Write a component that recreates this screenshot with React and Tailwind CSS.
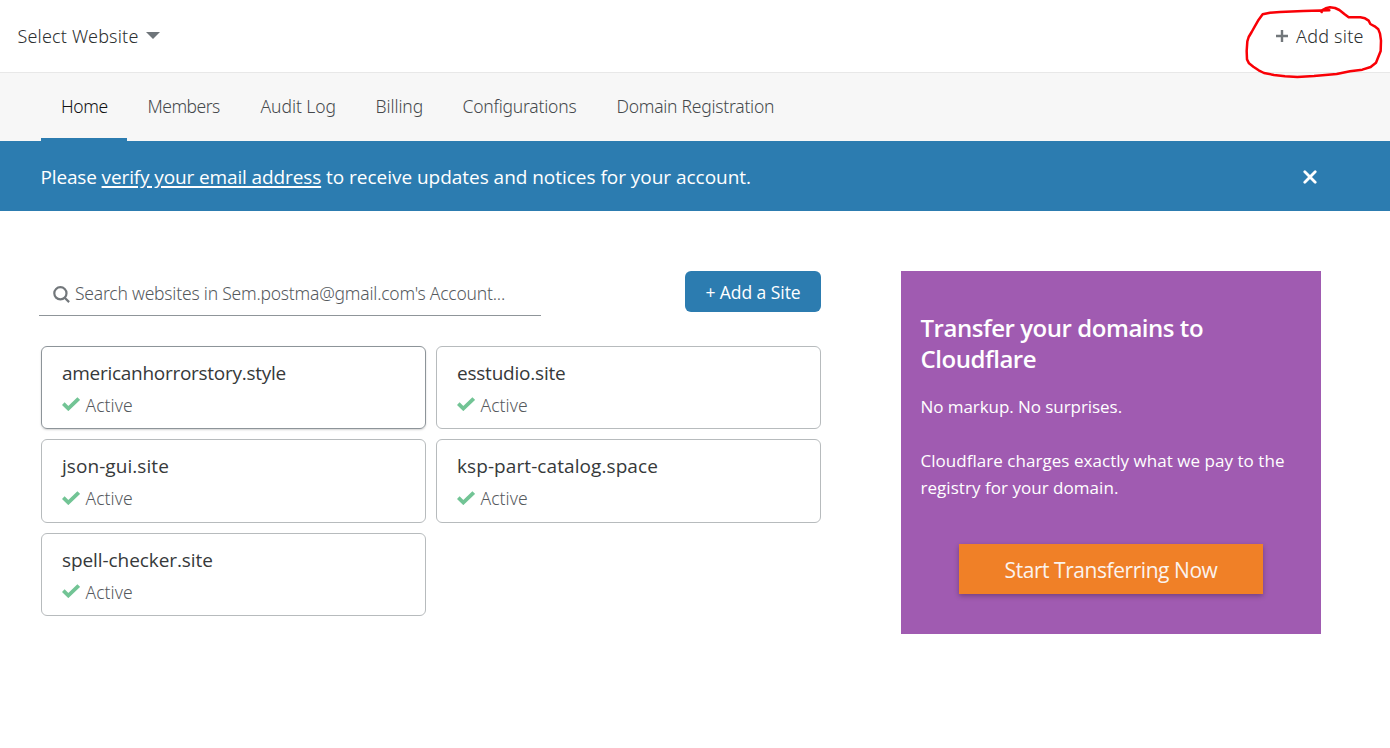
import React from "react";

const tabs = [
  { label: "Home", width: "w-[46px]", spacing: "tracking-[-0.4px]" },
  { label: "Members", width: "w-[73px]", spacing: "tracking-[-0.5px]" },
  { label: "Audit Log", width: "w-[75px]", spacing: "tracking-[-0.05px]" },
  { label: "Billing", width: "w-[47px]", spacing: "tracking-[-0.1px]" },
  { label: "Configurations", width: "w-[114px]", spacing: "tracking-[-0.22px]" },
  { label: "Domain Registration", width: "w-[158px]", spacing: "tracking-[-0.25px]" },
];

const sites = [
  { name: "americanhorrorstory.style", spacing: "tracking-[-0.28px]" },
  { name: "esstudio.site", spacing: "tracking-[-0.22px]" },
  { name: "json-gui.site", spacing: "tracking-[0.06px]" },
  { name: "ksp-part-catalog.space", spacing: "tracking-[0.08px]" },
  { name: "spell-checker.site", spacing: "tracking-[-0.08px]" },
];

function Check() {
  return (
    <svg className="mb-[2px] h-[14px] w-[18px] shrink-0" viewBox="0 0 18 14" fill="none" stroke="#72c495" strokeWidth="3.8">
      <path d="M1.3 6.7 6.3 11.5 16.7 1.5" />
    </svg>
  );
}

function SiteCard({ name, spacing, active }) {
  return (
    <div
      className={
        active
          ? "h-[83.5px] rounded-[6px] border border-[#8d9499] px-5 pt-[12px] shadow-[0_1px_2px_rgba(0,0,0,0.18)]"
          : "h-[83.5px] rounded-[6px] border border-[#b7bbbd] px-5 pt-[12px]"
      }
    >
      <div className={`h-7 text-[19px] leading-7 text-[#36393a] ${spacing}`}>{name}</div>
      <div className="mt-[5px] flex h-[27px] items-center">
        <Check />
        <span className="ml-[5.5px] font-['Noto_Sans',sans-serif] text-[17.5px] leading-[27px] font-light tracking-[0.05px] text-[#55595d]">
          Active
        </span>
      </div>
    </div>
  );
}

export default function App() {
  return (
    <div className="relative h-[748px] w-[1390px] overflow-hidden bg-white font-['Open_Sans',sans-serif] whitespace-nowrap">
      <header className="flex h-[73px] items-center justify-between border-b border-[#e8e8e8] pr-[25px] pl-[17.5px] font-['Noto_Sans',sans-serif] text-[18px] font-light text-[#2c2f30]">
        <div className="flex items-center">
          <span className="w-[122px] tracking-[0.18px]">Select Website</span>
          <svg className="mb-px ml-[6px] h-[7px] w-[14px]" viewBox="0 0 14 7" fill="#6f757a">
            <path d="M0 0h14L7 7z" />
          </svg>
        </div>
        <div className="flex items-center">
          <svg className="mr-[8px] h-[12px] w-[12px]" viewBox="0 0 12 12" fill="none" stroke="#72777b" strokeWidth="2.4">
            <path d="M6 0v12M0 6h12" />
          </svg>
          <span className="w-[69px] tracking-[0.22px]">Add site</span>
        </div>
      </header>

      <nav className="flex h-[68px] bg-[#f7f7f7] pl-[41px]">
        {tabs.map((tab, i) => (
          <div
            key={tab.label}
            className={
              i === 0
                ? "border-b-[3px] border-[#2c7cb0] px-5 text-[#101112]"
                : "border-b-[3px] border-transparent pr-[19.5px] pl-[20.5px] text-[#45494c]"
            }
          >
            <div
              className={`h-[65px] font-['Noto_Sans',sans-serif] text-[17.5px] leading-[67px] font-light ${tab.width} ${tab.spacing}`}
            >
              {tab.label}
            </div>
          </div>
        ))}
      </nav>

      <div className="flex h-[70px] items-center justify-between bg-[#2c7cb0] pr-[73px] pl-[40.5px] text-[19px] text-white">
        <p className="pt-[2px] tracking-[-0.03px]">
          <span className="tracking-[-0.15px]">Please </span>
          <span className="tracking-[-0.12px] underline decoration-2 underline-offset-2">verify your email address</span> to receive updates and notices for your account.
        </p>
        <svg className="mt-px h-[14px] w-[14px]" viewBox="0 0 14 14" fill="none" stroke="white" strokeWidth="2.8" strokeLinecap="round">
          <path d="m1.8 1.8 10.4 10.4M12.2 1.8 1.8 12.2" />
        </svg>
      </div>

      <main className="flex items-start pt-[60px] pl-[39px]">
        <section className="w-[782px]">
          <div className="flex items-start justify-between">
            <div className="flex h-[45px] w-[502px] items-center border-b border-[#8f9599] pl-[14px]">
              <svg className="mt-[3px] h-[17px] w-[17px]" viewBox="0 0 17 17" fill="none" stroke="#72777b" strokeWidth="2.2">
                <circle cx="7.4" cy="7.3" r="6.1" />
                <path d="m11.7 11.8 4.4 4.3" />
              </svg>
              <span className="ml-[5px] font-['Noto_Sans',sans-serif] text-[17.5px] font-light tracking-[-0.21px] text-[#55595d]">
                Search websites in Sem.postma@gmail.com's Account...
              </span>
            </div>
            <button className="h-[41px] w-[136px] rounded-[6px] bg-[#2c7cb0] pt-px text-[17.5px] tracking-[-0.06px] text-white">
              + Add a Site
            </button>
          </div>
          <div className="mt-[29.6px] ml-[2px] grid grid-cols-2 gap-[10px]">
            {sites.map((site, i) => (
              <SiteCard key={site.name} {...site} active={i === 0} />
            ))}
          </div>
        </section>

        <aside className="ml-20 h-[363px] w-[420px] bg-[#a05bb1] pt-[41px] pl-[19.5px] text-white">
          <h2 className="text-[24px] leading-[31px] font-semibold tracking-[-0.46px]">
            Transfer your domains to
            <br />
            Cloudflare
          </h2>
          <p className="mt-[19px] text-[17px] leading-[27px] tracking-[-0.06px]">No markup. No surprises.</p>
          <p className="mt-[27px] text-[17px] leading-[27px] tracking-[0.04px]">
            Cloudflare charges exactly what we pay to the
            <br />
            <span>registry for your domain.</span>
          </p>
          <button className="mt-[43px] ml-[38.5px] block h-[50px] w-[304px] bg-[#f08027] pt-[4px] text-[21px] tracking-[-0.45px] text-[#fbf3ee] shadow-[0_2px_5px_rgba(0,0,0,0.28)]">
            Start Transferring Now
          </button>
        </aside>
      </main>

      <svg
        className="absolute top-0 left-[1230px] h-[85px] w-[160px]"
        viewBox="0 0 480 255"
        fill="none"
        stroke="#f90006"
        strokeWidth="7.5"
        strokeLinecap="round"
        strokeLinejoin="round"
      >
        <path d="M298 31 L220 33 L150 36 L120 38 L98 43 L86 59 L74 80 L65 96 L56 111 L52 124 L50 153 L51 178 L57 190 L70 200 L86 211 L102 219 L132 225 L165 229 L202 231 L252 228 L320 222 L360 214 L397 209 L422 201 L438 188 L446 168 L452 153 L453 122 L450 101 L445 88 L434 79 L421 72 L416 62 L405 55 L391 52 L356 52 L344 43 L328 30 L315 24 L300 22 L287 25 L277 30 L275 36" />
      </svg>
    </div>
  );
}
